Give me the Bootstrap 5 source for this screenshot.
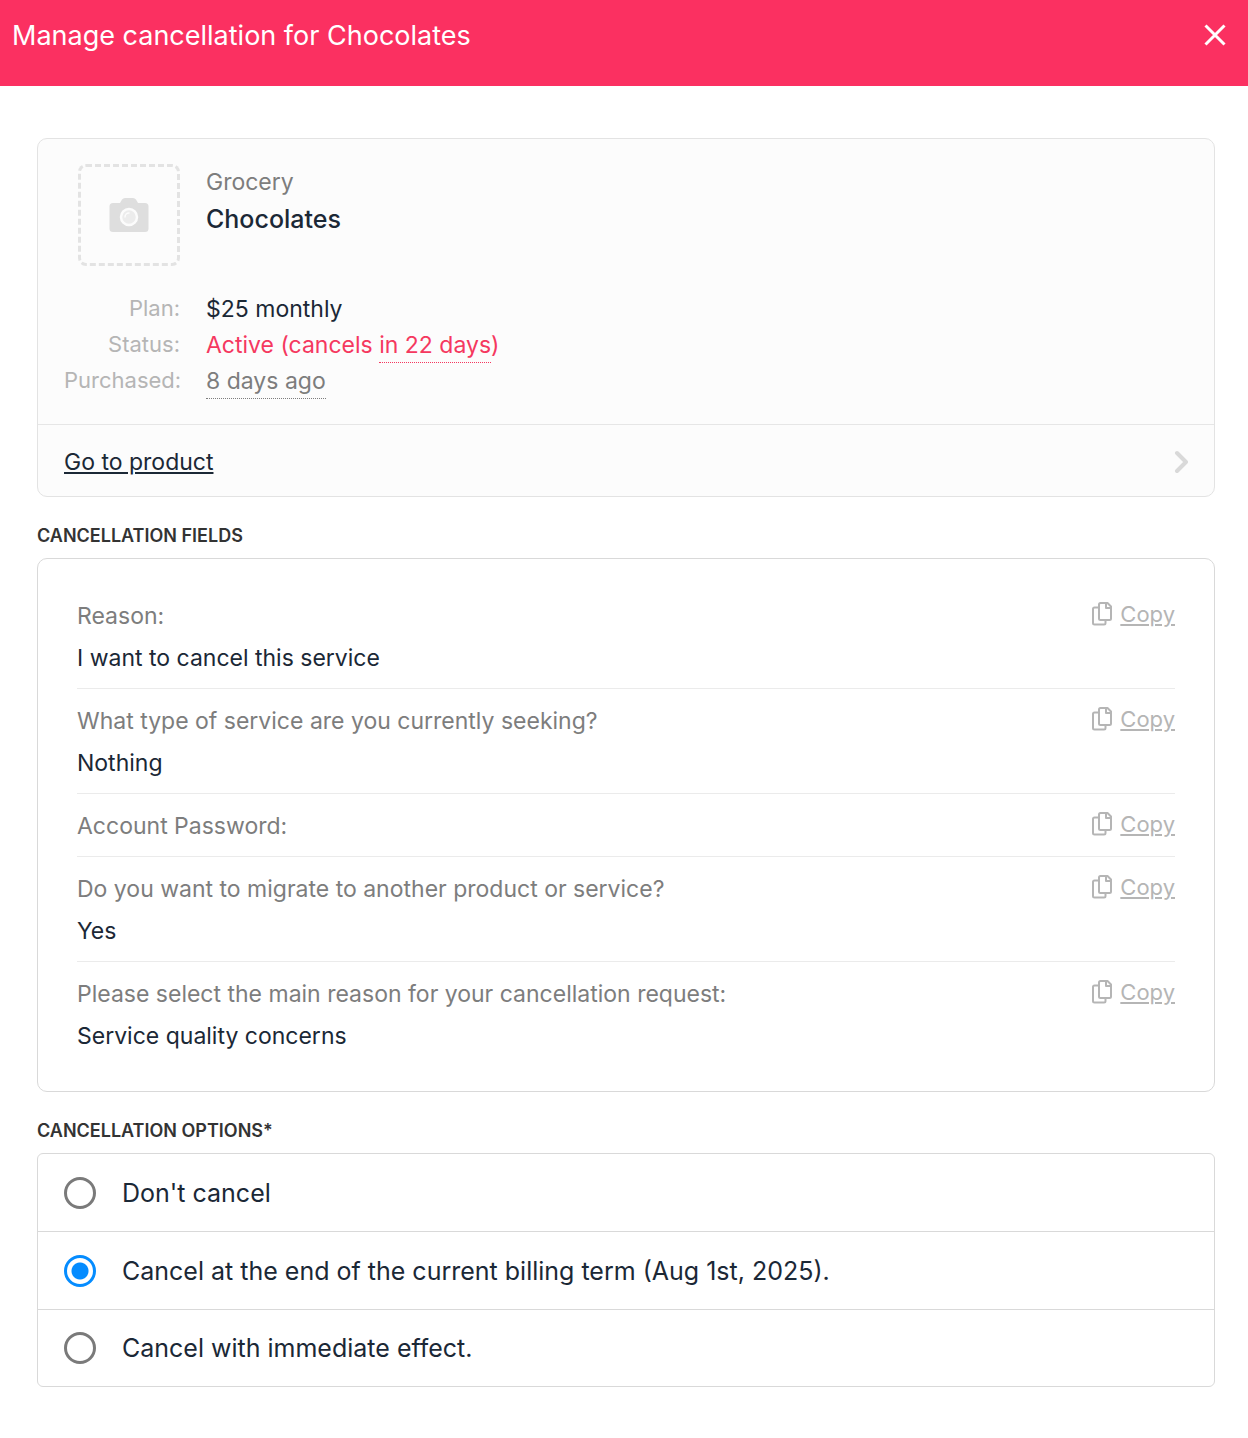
<!DOCTYPE html>
<html lang="en">
<head>
<meta charset="utf-8">
<meta name="viewport" content="width=device-width, initial-scale=1">
<title>Manage cancellation</title>
<link href="https://cdn.jsdelivr.net/npm/bootstrap@5.3.0/dist/css/bootstrap.min.css" rel="stylesheet">
<style>
  body { font-family: Inter, "Liberation Sans", sans-serif; font-size: 23px; line-height: 36px; color: #1b2836; background: #fff; }
  .topbar { background: #fb3061; color: #fff; padding: 12px 20px 26px 12px; }
  .topbar-title { font-size: 27px; line-height: 48px; font-weight: 400; }
  .close-btn { width: 26px; height: 26px; margin-top: 10px; }
  .page-body { padding: 52px 33px 48px 37px; }
  .panel { border: 1px solid #d9d9d9; border-radius: 10px; }
  .panel-soft { background: #fcfcfc; border-color: #e3e3e3; }
  .summary { padding: 25px 26px; }
  .summary-row { column-gap: 26px; }
  .side-col { width: 116px; flex: none; }
  .thumb { width: 102px; height: 102px; border: 3px dashed #e3e3e3; border-radius: 8px; }
  .product-name { font-size: 25px; font-weight: 500; line-height: 38px; }
  .info-list { margin-top: 25px; }
  .info-list dt { font-size: 22px; line-height: 34px; font-weight: 400; color: #b5b5b5; }
  .muted-text { color: #7d7d7d; }
  .status-text { color: #f5385f; }
  .dotted { border-bottom: 1px dotted currentColor; padding-bottom: 3px; }
  .product-link { border-top: 1px solid #e6e6e6; padding: 19px 26px 16px; color: inherit; }
  .section-title { font-size: 18px; font-weight: 600; line-height: 24px; color: #333; text-transform: uppercase; margin: 27px 0 10px; }
  .fields { padding: 25px 39px; }
  .field-row { padding: 11px 0 9px; line-height: 42px; border-bottom: 1px solid #ebebeb; }
  .field-row:last-child { border-bottom: 0; }
  .copy-btn { font-size: 22px; line-height: 38px; color: #b5b5b5; }
  .options { border-radius: 6px; }
  .option-row { min-height: 78px; padding: 0 26px; gap: 26px; font-size: 25px; border-bottom: 1px solid #d9d9d9; }
  .option-row:last-child { border-bottom: 0; min-height: 76px; }
  .option-row .form-check-input { width: 32px; height: 32px; margin: 0; border: 3px solid #7a7a7a; background-color: #fff; box-shadow: none; flex: none; }
  .option-row .form-check-input:checked { border-color: #058cff; background-image: radial-gradient(circle, #058cff 8px, transparent 9px); background-size: auto; background-position: center; }
</style>
</head>
<body>
<header class="topbar d-flex justify-content-between align-items-start">
  <h1 class="topbar-title m-0">Manage cancellation for Chocolates</h1>
  <button type="button" class="close-btn btn border-0 p-0 d-flex text-white" aria-label="Close">
    <svg width="26" height="26" viewBox="0 0 26 26" fill="none" stroke="currentColor" stroke-width="3"><path d="M3.500 3.500l19 19M22.500 3.500l-19 19"/></svg>
  </button>
</header>

<main class="page-body">
  <section class="panel panel-soft">
    <div class="summary">
      <div class="summary-row d-flex">
        <div class="side-col d-flex justify-content-end">
          <div class="thumb d-flex align-items-center justify-content-center">
            <svg width="40" height="34" viewBox="0 0 40 34"><path fill="#dedede" d="M4 5h7l2-3.500Q14 0 16 0h8q2 0 3 1.500L29 5h7q3.500 0 3.500 3.500v22q0 3.500-3.500 3.500H4Q.5 34 .5 30.500v-22Q.5 5 4 5z"/><circle cx="20" cy="19" r="8" fill="#ececec" stroke="#fcfcfc" stroke-width="2.500"/><path d="M16 19a4 4 0 0 1 4-4" fill="none" stroke="#fcfcfc" stroke-width="1.500" stroke-linecap="round"/></svg>
          </div>
        </div>
        <div>
          <div class="muted-text">Grocery</div>
          <div class="product-name">Chocolates</div>
        </div>
      </div>
      <dl class="info-list mb-0">
        <div class="summary-row d-flex"><dt class="side-col text-end">Plan:</dt><dd class="m-0">$25 monthly</dd></div>
        <div class="summary-row d-flex"><dt class="side-col text-end">Status:</dt><dd class="m-0 status-text">Active (cancels <span class="dotted">in 22 days</span>)</dd></div>
        <div class="summary-row d-flex"><dt class="side-col text-end">Purchased:</dt><dd class="m-0 muted-text"><span class="dotted">8 days ago</span></dd></div>
      </dl>
    </div>
    <a href="#" class="product-link d-flex justify-content-between align-items-center">
      <span>Go to product</span>
      <svg width="14" height="24" viewBox="0 0 14 24" fill="none" stroke="#d9d9d9" stroke-width="4" stroke-linecap="round" stroke-linejoin="round"><path d="M3 3l9 9-9 9"/></svg>
    </a>
  </section>

  <h2 class="section-title">Cancellation fields</h2>
  <section class="panel fields">
    <div class="field-row d-flex justify-content-between align-items-start">
      <div><div class="muted-text">Reason:</div><div>I want to cancel this service</div></div>
      <button type="button" class="copy-btn btn border-0 p-0 d-flex align-items-center gap-2"><svg width="20" height="24" viewBox="0 0 20 24" fill="none" stroke="currentColor" stroke-width="2" stroke-linejoin="round"><path d="M6 5.500H2.500A1.500 1.500 0 0 0 1 7v14a1.500 1.500 0 0 0 1.500 1.500H12a1.500 1.500 0 0 0 1.500-1.500v-3"/><path d="M8.500 1h7L19 4.500v12a1.500 1.500 0 0 1-1.500 1.500h-9A1.500 1.500 0 0 1 7 16.500v-14A1.500 1.500 0 0 1 8.500 1zM14 1v5h5"/></svg><span class="text-decoration-underline">Copy</span></button>
    </div>
    <div class="field-row d-flex justify-content-between align-items-start">
      <div><div class="muted-text">What type of service are you currently seeking?</div><div>Nothing</div></div>
      <button type="button" class="copy-btn btn border-0 p-0 d-flex align-items-center gap-2"><svg width="20" height="24" viewBox="0 0 20 24" fill="none" stroke="currentColor" stroke-width="2" stroke-linejoin="round"><path d="M6 5.500H2.500A1.500 1.500 0 0 0 1 7v14a1.500 1.500 0 0 0 1.500 1.500H12a1.500 1.500 0 0 0 1.500-1.500v-3"/><path d="M8.500 1h7L19 4.500v12a1.500 1.500 0 0 1-1.500 1.500h-9A1.500 1.500 0 0 1 7 16.500v-14A1.500 1.500 0 0 1 8.500 1zM14 1v5h5"/></svg><span class="text-decoration-underline">Copy</span></button>
    </div>
    <div class="field-row d-flex justify-content-between align-items-start">
      <div class="muted-text">Account Password:</div>
      <button type="button" class="copy-btn btn border-0 p-0 d-flex align-items-center gap-2"><svg width="20" height="24" viewBox="0 0 20 24" fill="none" stroke="currentColor" stroke-width="2" stroke-linejoin="round"><path d="M6 5.500H2.500A1.500 1.500 0 0 0 1 7v14a1.500 1.500 0 0 0 1.500 1.500H12a1.500 1.500 0 0 0 1.500-1.500v-3"/><path d="M8.500 1h7L19 4.500v12a1.500 1.500 0 0 1-1.500 1.500h-9A1.500 1.500 0 0 1 7 16.500v-14A1.500 1.500 0 0 1 8.500 1zM14 1v5h5"/></svg><span class="text-decoration-underline">Copy</span></button>
    </div>
    <div class="field-row d-flex justify-content-between align-items-start">
      <div><div class="muted-text">Do you want to migrate to another product or service?</div><div>Yes</div></div>
      <button type="button" class="copy-btn btn border-0 p-0 d-flex align-items-center gap-2"><svg width="20" height="24" viewBox="0 0 20 24" fill="none" stroke="currentColor" stroke-width="2" stroke-linejoin="round"><path d="M6 5.500H2.500A1.500 1.500 0 0 0 1 7v14a1.500 1.500 0 0 0 1.500 1.500H12a1.500 1.500 0 0 0 1.500-1.500v-3"/><path d="M8.500 1h7L19 4.500v12a1.500 1.500 0 0 1-1.500 1.500h-9A1.500 1.500 0 0 1 7 16.500v-14A1.500 1.500 0 0 1 8.500 1zM14 1v5h5"/></svg><span class="text-decoration-underline">Copy</span></button>
    </div>
    <div class="field-row d-flex justify-content-between align-items-start">
      <div><div class="muted-text">Please select the main reason for your cancellation request:</div><div>Service quality concerns</div></div>
      <button type="button" class="copy-btn btn border-0 p-0 d-flex align-items-center gap-2"><svg width="20" height="24" viewBox="0 0 20 24" fill="none" stroke="currentColor" stroke-width="2" stroke-linejoin="round"><path d="M6 5.500H2.500A1.500 1.500 0 0 0 1 7v14a1.500 1.500 0 0 0 1.500 1.500H12a1.500 1.500 0 0 0 1.500-1.500v-3"/><path d="M8.500 1h7L19 4.500v12a1.500 1.500 0 0 1-1.500 1.500h-9A1.500 1.500 0 0 1 7 16.500v-14A1.500 1.500 0 0 1 8.500 1zM14 1v5h5"/></svg><span class="text-decoration-underline">Copy</span></button>
    </div>
  </section>

  <h2 class="section-title" id="options-title">Cancellation options*</h2>
  <section class="panel options" role="radiogroup" aria-labelledby="options-title">
    <label class="option-row d-flex align-items-center" for="opt-keep"><input class="form-check-input" type="radio" name="cancel" id="opt-keep"><span>Don't cancel</span></label>
    <label class="option-row d-flex align-items-center" for="opt-term"><input class="form-check-input" type="radio" name="cancel" id="opt-term" checked><span>Cancel at the end of the current billing term (Aug 1st, 2025).</span></label>
    <label class="option-row d-flex align-items-center" for="opt-now"><input class="form-check-input" type="radio" name="cancel" id="opt-now"><span>Cancel with immediate effect.</span></label>
  </section>
</main>
<script src="https://cdn.jsdelivr.net/npm/bootstrap@5.3.0/dist/js/bootstrap.bundle.min.js"></script>
</body>
</html>
